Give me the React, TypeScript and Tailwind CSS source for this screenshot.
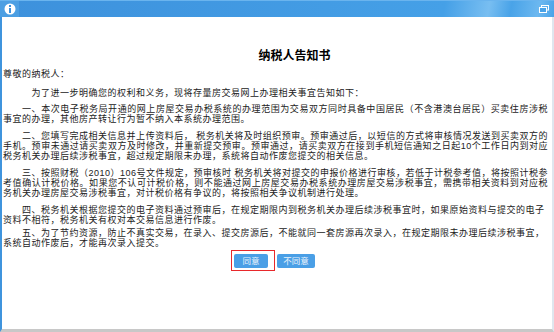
import React from "react";

type Para = { lines: string[]; full: number };

// full = how many leading lines run edge to edge (justified)
const paras: Para[] = [
  {
    full: 1,
    lines: [
      "一、本次电子税务局开通的网上房屋交易办税系统的办理范围为交易双方同时具备中国居民（不含港澳台居民）买卖住房涉税",
      "事宜的办理，其他房产转让行为暂不纳入本系统办理范围。",
    ],
  },
  {
    full: 2,
    lines: [
      "二、您填写完成相关信息并上传资料后， 税务机关将及时组织预审。预审通过后，以短信的方式将审核情况发送到买卖双方的",
      "手机。预审未通过请买卖双方及时修改，并重新提交预审。预审通过，请买卖双方在接到手机短信通知之日起10个工作日内到对应",
      "税务机关办理后续涉税事宜，超过规定期限未办理，系统将自动作废您提交的相关信息。",
    ],
  },
  {
    full: 2,
    lines: [
      "三、按照财税（2010）106号文件规定，预审核时 税务机关将对提交的申报价格进行审核，若低于计税参考值，将按照计税参",
      "考值确认计税价格。如果您不认可计税价格，则不能通过网上房屋交易办税系统办理房屋交易涉税事宜，需携带相关资料到对应税",
      "务机关办理房屋交易涉税事宜，对计税价格有争议的，将按照相关争议机制进行处理。",
    ],
  },
  {
    full: 0,
    lines: [
      "四、税务机关根据您提交的电子资料通过预审后，在规定期限内到税务机关办理后续涉税事宜时，如果原始资料与提交的电子",
      "资料不相符，税务机关有权对本交易信息进行作废。",
    ],
  },
  {
    full: 0,
    lines: [
      "五、为了节约资源，防止不真实交易，在录入、提交房源后，不能就同一套房源再次录入，在规定期限未办理后续涉税事宜，",
      "系统自动作废后，才能再次录入提交。",
    ],
  },
];

const gaps = ["mt-[6px]", "mt-[7px]", "mt-[7px]", "mt-[7px]", "mt-[3px]"];

export default function App() {
  return (
    <div className="w-[554px] h-[332px] bg-white flex flex-col overflow-hidden font-['Noto_Sans_CJK_SC',sans-serif]">
      {/* title bar */}
      <div className="h-[17px] flex items-center bg-[linear-gradient(100deg,#3d91dc_0%,#45a0e7_80%,#78bef1_88%,#49a3e8_92%,#6cb8f0_97%,#4aa3e8_100%)] border-t border-[#6ab4ee]">
        <div className="w-[19px] h-full flex items-center justify-center bg-[#4c9fe3]">
          <svg width="12" height="12" viewBox="0 0 12 12">
            <circle cx="6" cy="6" r="5.5" fill="#fff" />
            <rect x="5" y="2" width="2" height="2" fill="#3d91dc" />
            <rect x="5" y="5" width="2" height="5" fill="#3d91dc" />
          </svg>
        </div>
        <div className="flex-1" />
        <svg width="10" height="8" viewBox="0 0 10 8" className="mr-[5px]">
          <rect x="2.5" y="0.5" width="7" height="4.5" fill="none" stroke="#fff" />
          <rect x="0.5" y="2.5" width="7" height="5" fill="#4aa3e8" stroke="#fff" />
        </svg>
      </div>

      <div className="flex-1 flex border-l-2 border-l-[#3f94dd] border-r-2 border-r-[#dfe6ee] border-b-[3px] border-b-[#c8c8c8]">
        <div className="flex-1 pl-[1px] pr-[5px] pt-[32px] font-['Liberation_Sans','Noto_Sans_CJK_SC',sans-serif] text-[9px] tracking-[0.5px] leading-[10px] text-[#222]">
          <div className="text-center pl-[38px] font-['Noto_Sans_CJK_SC',sans-serif] text-[12px] leading-[12px] tracking-normal font-bold text-black">纳税人告知书</div>
          <div className="mt-[8px]">尊敬的纳税人：</div>
          <div className="mt-[9px] pl-[28.5px]">为了进一步明确您的权利和义务，现将存量房交易网上办理相关事宜告知如下：</div>
          {paras.map((p, i) => (
            <div key={i} className={gaps[i]}>
              {p.lines.map((l, j) => (
                <div
                  key={j}
                  className={
                    (j === 0 ? "pl-[19px] " : "") +
                    "whitespace-nowrap " +
                    (j < p.full ? "text-justify [text-align-last:justify]" : "")
                  }
                >
                  {l}
                </div>
              ))}
            </div>
          ))}

          <div className="mt-[6px] flex justify-center gap-[9px] pr-[2px]">
            <div className="relative">
              <button className="w-[34px] h-[14px] rounded-[2px] bg-[#4a9fe6] text-[8.5px] leading-[14px] tracking-normal text-[#eaf4fc]">同意</button>
              <div className="absolute left-[-3px] top-[-4px] w-[44px] h-[21px] border-[1.5px] border-[#e8282b]" />
            </div>
            <button className="w-[38px] h-[14px] rounded-[2px] bg-[#4a9fe6] text-[8.5px] leading-[14px] tracking-normal text-[#eaf4fc]">不同意</button>
          </div>
        </div>
      </div>
    </div>
  );
}
